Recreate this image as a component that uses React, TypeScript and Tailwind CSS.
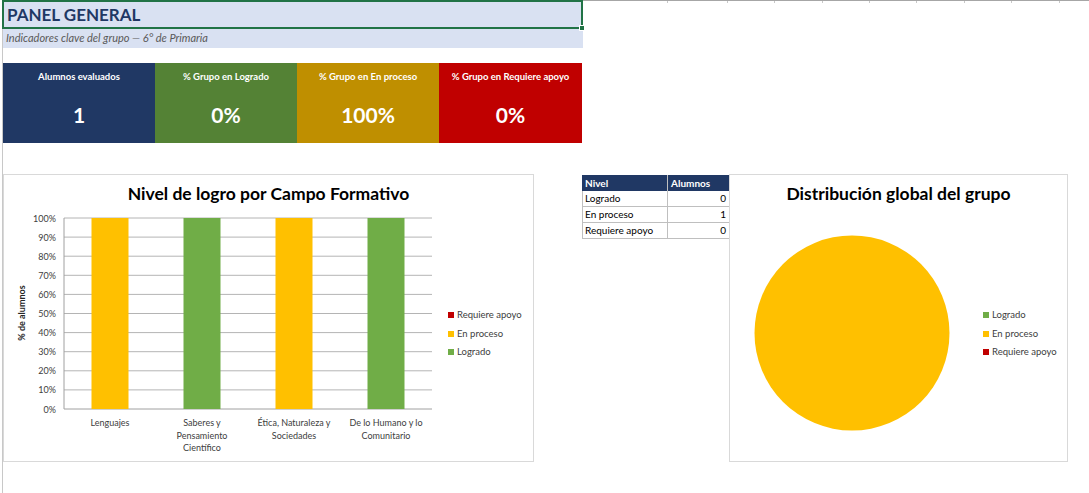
const kpis = [
  { label: "Alumnos evaluados", value: "1", bg: "bg-[#203864]", w: "w-[152px]" },
  { label: "% Grupo en Logrado", value: "0%", bg: "bg-[#548235]", w: "w-[142px]" },
  { label: "% Grupo en En proceso", value: "100%", bg: "bg-[#bf8f00]", w: "w-[142px]" },
  { label: "% Grupo en Requiere apoyo", value: "0%", bg: "bg-[#c00000]", w: "w-[143px]" },
];

const campos = [
  { lines: ["Lenguajes"], color: "#ffc000" },
  { lines: ["Saberes y", "Pensamiento", "Científico"], color: "#70ad47" },
  { lines: ["Ética, Naturaleza y", "Sociedades"], color: "#ffc000" },
  { lines: ["De lo Humano y lo", "Comunitario"], color: "#70ad47" },
];

const tabla = [
  { nivel: "Logrado", n: 0 },
  { nivel: "En proceso", n: 1 },
  { nivel: "Requiere apoyo", n: 0 },
];

const colTicks = [84, 144, 191, 239, 286, 333, 381, 428, 476];

function LegendItem({ color, label }: { color: string; label: string }) {
  return (
    <div className="flex h-[18.5px] items-center gap-[3px] text-[9.5px] text-[#404040]">
      <span className={`h-[6px] w-[6px] ${color}`} />
      <span>{label}</span>
    </div>
  );
}

function BarChart() {
  const top = 4;
  const bottom = 195;
  const left = 60;
  const right = 428;
  const step = (bottom - top) / 10;
  return (
    <div className="flex h-[288px] w-[531px] flex-col border border-[#d9d9d9] bg-white">
      <div className="flex h-[39px] items-center justify-center text-[17.5px] font-bold text-black">
        Nivel de logro por Campo Formativo
      </div>
      <div className="flex flex-1">
        <svg width="440" height="246" className="shrink-0">
          {Array.from({ length: 11 }).map((_, i) => {
            const y = bottom - i * step;
            return (
              <g key={i}>
                <line x1={left} x2={right} y1={y} y2={y} stroke={i === 0 ? "#a0a0a0" : "#b4b4b4"} strokeWidth="1" />
                <text x={left - 8} y={y + 3.5} textAnchor="end" fontSize="9" fill="#404040">
                  {i * 10}%
                </text>
              </g>
            );
          })}
          <line x1={left} x2={left} y1={top} y2={bottom} stroke="#a0a0a0" strokeWidth="1" />
          {campos.map((c, i) => {
            const cx = left + 46 + i * 92;
            return (
              <g key={i}>
                <rect x={cx - 18.5} y={top} width="37" height={bottom - top} fill={c.color} />
                {c.lines.map((l, j) => (
                  <text key={j} x={cx} y={212 + j * 12.5} textAnchor="middle" fontSize="9" fill="#404040">
                    {l}
                  </text>
                ))}
              </g>
            );
          })}
          <text
            x="21"
            y="99"
            transform="rotate(-90 21 99)"
            textAnchor="middle"
            fontSize="9"
            fontWeight="bold"
            fill="#262626"
          >
            % de alumnos
          </text>
        </svg>
        <div className="ml-[4px] flex flex-col pt-[92px]">
          <LegendItem color="bg-[#c00000]" label="Requiere apoyo" />
          <LegendItem color="bg-[#ffc000]" label="En proceso" />
          <LegendItem color="bg-[#70ad47]" label="Logrado" />
        </div>
      </div>
    </div>
  );
}

function PieChart() {
  return (
    <div className="flex h-[288px] w-[339px] flex-col border border-[#d9d9d9] bg-white">
      <div className="flex h-[39px] items-center justify-center text-[17.5px] font-bold text-black">
        Distribución global del grupo
      </div>
      <div className="flex flex-1">
        <svg width="252" height="246" className="shrink-0">
          <circle cx="122" cy="119" r="97.5" fill="#ffc000" />
        </svg>
        <div className="ml-[1px] flex flex-col pt-[92px]">
          <LegendItem color="bg-[#70ad47]" label="Logrado" />
          <LegendItem color="bg-[#ffc000]" label="En proceso" />
          <LegendItem color="bg-[#c00000]" label="Requiere apoyo" />
        </div>
      </div>
    </div>
  );
}

export default function App() {
  return (
    <div className="h-[493px] w-[1089px] overflow-hidden bg-white pl-[2px] font-['Lato','Liberation_Sans',sans-serif]">
      <div className="flex h-full flex-col border-l border-[#c8c8c8]">
        {/* encabezado */}
        <div className="flex h-[29px]">
          <div className="relative -ml-px flex h-[29px] w-[581px] shrink-0 items-center border-2 border-[#217346] bg-[#d9e1f2] pl-[3px]">
            <span className="text-[17px] font-bold text-[#1f3864]">PANEL GENERAL</span>
            <span className="absolute -bottom-[4px] -right-[4px] h-[6px] w-[6px] border border-white bg-[#217346]" />
          </div>
          <div className="relative h-[2px] flex-1 border-t border-[#a6a6a6]">
            {colTicks.map((x) => (
              <span key={x} className="absolute top-0 h-[2px] w-px bg-[#c8c8c8]" style={{ left: x }} />
            ))}
          </div>
        </div>
        <div className="flex h-[19px] w-[580px] items-center bg-[#d9e1f2] pl-[3px] text-[11px] italic text-[#595959]">
          Indicadores clave del grupo — 6° de Primaria
        </div>

        {/* indicadores */}
        <div className="mt-[15px] flex h-[80px] w-[579px]">
          {kpis.map((k) => (
            <div key={k.label} className={`flex h-full flex-col items-center text-white ${k.bg} ${k.w}`}>
              <div className="mt-[7px] text-[9.5px] font-bold">{k.label}</div>
              <div className="mt-[20px] text-[21px] font-bold leading-none">{k.value}</div>
            </div>
          ))}
        </div>

        {/* graficas */}
        <div className="mt-[31px] flex items-start">
          <BarChart />
          <div className="ml-[48px] mt-px w-[147px] text-[10px] text-black">
            <div className="flex h-[16px] bg-[#203864] font-bold text-white">
              <div className="flex w-[86px] items-center border-r border-[#bfbfbf] pl-[3px]">Nivel</div>
              <div className="flex flex-1 items-center pl-[3px]">Alumnos</div>
            </div>
            {tabla.map((r) => (
              <div key={r.nivel} className="flex h-[16px] border-b border-l border-[#bfbfbf]">
                <div className="flex w-[85px] items-center border-r border-[#bfbfbf] pl-[2px]">{r.nivel}</div>
                <div className="flex flex-1 items-center justify-end pr-[3px]">{r.n}</div>
              </div>
            ))}
          </div>
          <PieChart />
        </div>
      </div>
    </div>
  );
}
